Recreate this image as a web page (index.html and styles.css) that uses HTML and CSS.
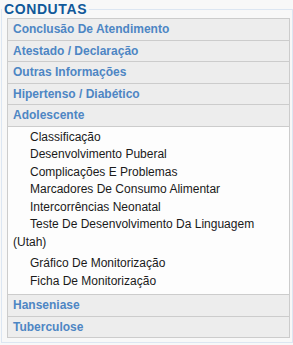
FILE: index.html
```html
<!DOCTYPE html>
<html lang="pt">
<head>
<meta charset="utf-8">
<link rel="stylesheet" href="styles.css">
</head>
<body>
<fieldset class="panel">
  <legend class="panel-title">CONDUTAS</legend>
  <div class="accordion">
    <div class="acc-header">Conclusão De Atendimento</div>
    <div class="acc-header">Atestado / Declaração</div>
    <div class="acc-header">Outras Informações</div>
    <div class="acc-header">Hipertenso / Diabético</div>
    <div class="acc-header">Adolescente</div>
    <div class="acc-content">
      <div class="item">Classificação</div>
      <div class="item">Desenvolvimento Puberal</div>
      <div class="item">Complicações E Problemas</div>
      <div class="item">Marcadores De Consumo Alimentar</div>
      <div class="item">Intercorrências Neonatal</div>
      <div class="item item-wrap">Teste De Desenvolvimento Da Linguagem (Utah)</div>
      <div class="item">Gráfico De Monitorização</div>
      <div class="item">Ficha De Monitorização</div>
    </div>
    <div class="acc-header">Hanseniase</div>
    <div class="acc-header">Tuberculose</div>
  </div>
</fieldset>
</body>
</html>
```

FILE: styles.css
```css
html, body {
  margin: 0;
  padding: 0;
  background: #f8f8f8;
  font-family: "Liberation Sans", Arial, sans-serif;
}

.panel {
  margin: 0 1px 0 1px;
  padding: 0 2px 4px 5px;
  border: 1px solid #dce6f2;
  width: 283px;
  box-sizing: content-box;
}

.panel-title {
  margin-left: -5px;
  padding: 1px 2px 0;
  font-size: 14px;
  line-height: 17px;
  font-weight: bold;
  letter-spacing: 0.6px;
  color: #10599a;
}

.accordion {
  border: 1px solid #cccccc;
  border-bottom: none;
}

.acc-header {
  background: #ededed;
  border-bottom: 1px solid #cccccc;
  padding-left: 5px;
  font-size: 12px;
  font-weight: bold;
  line-height: 20.5px;
  color: #4d86c4;
}

.acc-content {
  background: #fdfdfd;
  border-bottom: 1px solid #cccccc;
  padding: 2px 12px 4px 5px;
}

.item {
  font-size: 12px;
  line-height: 17.5px;
  color: #1a1a1a;
  text-indent: 17px;
}

.item-wrap {
  margin-bottom: 4px;
}
```
